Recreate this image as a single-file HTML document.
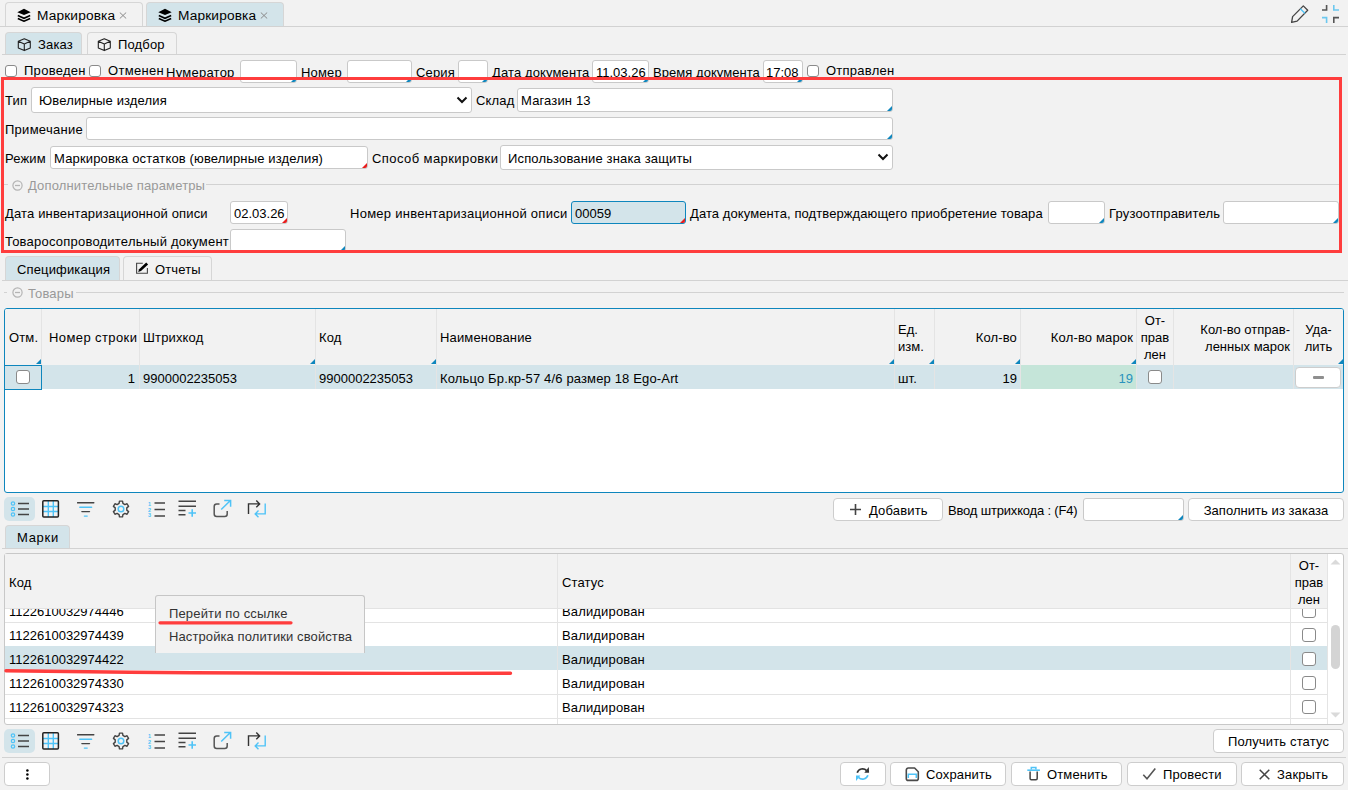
<!DOCTYPE html>
<html><head><meta charset="utf-8">
<style>
*{box-sizing:border-box}
html,body{margin:0;padding:0}
body{width:1348px;height:790px;background:#f2f2f2;position:relative;overflow:hidden;font-family:"Liberation Sans",sans-serif;font-size:13px;color:#000}
.a{position:absolute}
.t{position:absolute;white-space:nowrap;line-height:24px;height:25px;padding-top:1px;letter-spacing:0.15px}
.n{letter-spacing:0}
.hl{position:absolute;height:1px;background:#d2d2d2}
.tab{position:absolute;border:1px solid #d6d6d6;border-bottom:none;border-radius:4px 4px 0 0;background:#f2f2f2}
.tab.sel{background:#d3e4ea}
.inp{position:absolute;background:#fff;border:1px solid #c9c9c9;border-radius:3px;overflow:hidden}
.tri:after{content:"";position:absolute;right:0;bottom:0;width:0;height:0;border-left:5px solid transparent;border-bottom:5px solid #0e86bd}
.tri.r:after{border-bottom-color:#e81c1c}
.cb{position:absolute;width:12px;height:12px;border:1.5px solid #8a8a8a;border-radius:3px;background:#fff}
.btn{position:absolute;background:#fff;border:1px solid #cdcdcd;border-radius:4px;height:24px;line-height:22px;white-space:nowrap}
.vl{position:absolute;width:1px;background:#e4e4e4}
.gray{color:#999}
</style></head><body>

<!-- ===== top window tabs ===== -->
<div class="tab" style="left:5px;top:2px;width:138px;height:24px"></div>
<div class="tab sel" style="left:146px;top:2px;width:138px;height:24px"></div>
<div class="hl" style="left:0;top:26px;width:1348px"></div>
<svg class="a" style="left:17px;top:8px" width="14" height="14" viewBox="0 0 14 14"><path d="M7 0.8 L13.7 4.3 L7 6.9 L0.3 4.3 Z" fill="#000"/><path d="M0.8 7.6 L7 10.3 L13.2 7.6" fill="none" stroke="#000" stroke-width="1.6"/><path d="M0.8 10.5 L7 13.2 L13.2 10.5" fill="none" stroke="#000" stroke-width="1.6"/></svg>
<div class="t" style="left:37px;top:3px;font-size:13.7px">Маркировка</div>
<svg class="a" style="left:119px;top:12px" width="8" height="7" viewBox="0 0 8 7"><path d="M0.8 0.5 L7.2 6.5 M7.2 0.5 L0.8 6.5" stroke="#8a8a8a" stroke-width="1"/></svg>
<svg class="a" style="left:158px;top:8px" width="14" height="14" viewBox="0 0 14 14"><path d="M7 0.8 L13.7 4.3 L7 6.9 L0.3 4.3 Z" fill="#000"/><path d="M0.8 7.6 L7 10.3 L13.2 7.6" fill="none" stroke="#000" stroke-width="1.6"/><path d="M0.8 10.5 L7 13.2 L13.2 10.5" fill="none" stroke="#000" stroke-width="1.6"/></svg>
<div class="t" style="left:178px;top:3px;font-size:13.7px">Маркировка</div>
<svg class="a" style="left:260px;top:12px" width="8" height="7" viewBox="0 0 8 7"><path d="M0.8 0.5 L7.2 6.5 M7.2 0.5 L0.8 6.5" stroke="#8a8a8a" stroke-width="1"/></svg>

<!-- pencil + collapse -->
<svg class="a" style="left:1289px;top:3px" width="22" height="22" viewBox="0 0 22 22"><path d="M2.6 19.4 L3.6 13.6 L14.3 2.9 L18.7 7.2 L8.1 18.1 Z" fill="none" stroke="#444" stroke-width="1.3" stroke-linejoin="round"/><path d="M11.3 5.8 L15.9 10.2" stroke="#4fc3f7" stroke-width="1.4"/></svg>
<svg class="a" style="left:1321px;top:4px" width="20" height="20" viewBox="0 0 20 20"><path d="M1 6 H5.6 V1.1" fill="none" stroke="#555" stroke-width="1.6"/><path d="M18 13.6 H12.8 V18.9" fill="none" stroke="#555" stroke-width="1.6"/><path d="M12.8 1.1 V6 H18" fill="none" stroke="#6cc8ef" stroke-width="1.6"/><path d="M1 13.6 H5.6 V18.9" fill="none" stroke="#6cc8ef" stroke-width="1.6"/></svg>

<!-- ===== sub tabs ===== -->
<div class="tab sel" style="left:5px;top:32px;width:77px;height:22px"></div>
<div class="tab" style="left:87px;top:32px;width:90px;height:22px"></div>
<div class="hl" style="left:2px;top:54px;width:1344px"></div>
<svg class="a" style="left:17px;top:38px" width="15" height="14" viewBox="0 0 15 14"><path d="M7.3 0.7 L13.3 3.3 V9.9 L7.3 12.6 L1.3 9.9 V3.3 Z M1.3 3.3 L7.3 6 L13.3 3.3 M7.3 6 V12.6" fill="none" stroke="#222" stroke-width="1.1" stroke-linejoin="round"/></svg>
<div class="t" style="left:38px;top:32px">Заказ</div>
<svg class="a" style="left:97px;top:38px" width="15" height="14" viewBox="0 0 15 14"><path d="M7.3 0.7 L13.3 3.3 V9.9 L7.3 12.6 L1.3 9.9 V3.3 Z M1.3 3.3 L7.3 6 L13.3 3.3 M7.3 6 V12.6" fill="none" stroke="#222" stroke-width="1.1" stroke-linejoin="round"/></svg>
<div class="t" style="left:118px;top:32px">Подбор</div>

<!-- ===== checkbox row ===== -->
<div class="cb" style="left:5px;top:65px"></div>
<div class="t" style="left:24px;top:58px;letter-spacing:0.28px">Проведен</div>
<div class="cb" style="left:89px;top:65px"></div>
<div class="t" style="left:108px;top:58px;letter-spacing:0.33px">Отменен</div>
<div class="t" style="left:166px;top:60px;letter-spacing:0.25px">Нумератор</div>
<div class="inp tri" style="left:240px;top:60px;width:57px;height:23px"></div>
<div class="t" style="left:301px;top:60px;letter-spacing:0.15px">Номер</div>
<div class="inp tri" style="left:347px;top:60px;width:65px;height:23px"></div>
<div class="t" style="left:416px;top:60px;letter-spacing:0.15px">Серия</div>
<div class="inp tri" style="left:458px;top:60px;width:30px;height:23px"></div>
<div class="t" style="left:492px;top:60px;letter-spacing:0.12px">Дата документа</div>
<div class="inp tri" style="left:592px;top:60px;width:57px;height:23px"></div>
<div class="t n" style="left:596px;top:60px">11.03.26</div>
<div class="t" style="left:653px;top:60px;letter-spacing:0.05px">Время документа</div>
<div class="inp tri" style="left:763px;top:60px;width:40px;height:23px"></div>
<div class="t n" style="left:766px;top:60px">17:08</div>
<div class="cb" style="left:807px;top:65px"></div>
<div class="t" style="left:826px;top:58px;letter-spacing:0.25px">Отправлен</div>


<!-- ===== form in red rect ===== -->
<div class="t" style="left:5px;top:88px">Тип</div>
<div class="inp" style="left:31px;top:87px;width:441px;height:26px"></div>
<div class="t" style="left:39px;top:88px">Ювелирные изделия</div>
<svg class="a" style="left:456px;top:96px" width="12" height="8" viewBox="0 0 12 8"><path d="M1.5 1.5 L6 6 L10.5 1.5" fill="none" stroke="#111" stroke-width="2"/></svg>
<div class="t" style="left:476px;top:88px">Склад</div>
<div class="inp tri" style="left:517px;top:88px;width:376px;height:24px"></div>
<div class="t" style="left:521px;top:88px">Магазин 13</div>

<div class="t" style="left:5px;top:117px;letter-spacing:0.27px">Примечание</div>
<div class="inp tri" style="left:86px;top:117px;width:807px;height:23px"></div>

<div class="t" style="left:5px;top:146px">Режим</div>
<div class="inp tri r" style="left:50px;top:146px;width:318px;height:23px"></div>
<div class="t" style="left:54px;top:146px">Маркировка остатков (ювелирные изделия)</div>
<div class="t" style="left:372px;top:146px;letter-spacing:0.42px">Способ маркировки</div>
<div class="inp" style="left:500px;top:145px;width:393px;height:25px"></div>
<div class="t" style="left:508px;top:146px">Использование знака защиты</div>
<svg class="a" style="left:877px;top:153px" width="12" height="8" viewBox="0 0 12 8"><path d="M1.5 1.5 L6 6 L10.5 1.5" fill="none" stroke="#111" stroke-width="2"/></svg>

<div class="hl" style="left:4px;top:184px;width:4px"></div>
<svg class="a" style="left:12px;top:180px" width="11" height="11" viewBox="0 0 11 11"><circle cx="5.5" cy="5.5" r="4.6" fill="none" stroke="#b4b4b4" stroke-width="1.2"/><path d="M3 5.5 H8" stroke="#b4b4b4" stroke-width="1.3"/></svg>
<div class="t gray" style="left:28px;top:173px">Дополнительные параметры</div>
<div class="hl" style="left:206px;top:184px;width:1133px"></div>

<div class="t" style="left:5px;top:201px">Дата инвентаризационной описи</div>
<div class="inp tri r" style="left:230px;top:201px;width:58px;height:23px"></div>
<div class="t n" style="left:234px;top:201px">02.03.26</div>
<div class="t" style="left:350px;top:201px;letter-spacing:0.26px">Номер инвентаризационной описи</div>
<div class="inp tri r" style="left:571px;top:201px;width:115px;height:23px;background:#d3e4ea;border-color:#0e86bd"></div>
<div class="t n" style="left:575px;top:201px">00059</div>
<div class="t" style="left:690px;top:201px;letter-spacing:0.09px">Дата документа, подтверждающего приобретение товара</div>
<div class="inp tri" style="left:1048px;top:201px;width:57px;height:23px"></div>
<div class="t" style="left:1109px;top:201px;letter-spacing:0.17px">Грузоотправитель</div>
<div class="inp tri" style="left:1223px;top:201px;width:116px;height:23px"></div>

<div class="t" style="left:5px;top:229px;letter-spacing:0.22px">Товаросопроводительный документ</div>
<div class="inp tri" style="left:230px;top:229px;width:116px;height:23px"></div>


<!-- ===== spec tabs ===== -->
<div class="tab sel" style="left:5px;top:256px;width:115px;height:24px"></div>
<div class="tab" style="left:123px;top:256px;width:89px;height:24px"></div>
<div class="hl" style="left:2px;top:280px;width:1346px"></div>
<div class="t" style="left:17px;top:257px">Спецификация</div>
<svg class="a" style="left:135px;top:261px" width="14" height="14" viewBox="0 0 14 14"><path d="M7.8 2.3 H1.6 V12.3 H12.4 V6.9" fill="none" stroke="#444" stroke-width="1.1"/><path d="M3.2 10.9 L4.1 8.3 L11.2 1.6 L13.1 3.4 L6 10.1 Z" fill="#000"/></svg>
<div class="t" style="left:155px;top:257px">Отчеты</div>

<div class="hl" style="left:4px;top:292px;width:3px"></div>
<svg class="a" style="left:12px;top:287px" width="11" height="11" viewBox="0 0 11 11"><circle cx="5.5" cy="5.5" r="4.6" fill="none" stroke="#b4b4b4" stroke-width="1.2"/><path d="M3 5.5 H8" stroke="#b4b4b4" stroke-width="1.3"/></svg>
<div class="t gray" style="left:28px;top:281px">Товары</div>
<div class="hl" style="left:76px;top:292px;width:1268px"></div>

<!-- ===== goods table ===== -->
<div class="a" style="left:4px;top:308px;width:1340px;height:185px;border:1px solid #0e86bd;border-radius:3px;background:#fff;overflow:hidden">
  <div class="a" style="left:0;top:0;width:1338px;height:56px;background:#f2f2f2"></div>
  <div class="a" style="left:0;top:56px;width:1338px;height:24px;background:#d3e4ea"></div>
  <div class="a" style="left:1016px;top:56px;width:115px;height:24px;background:#c5e5d9"></div>
</div>
<div class="vl" style="left:41px;top:309px;height:80px"></div>
<div class="vl" style="left:139px;top:309px;height:80px"></div>
<div class="vl" style="left:315px;top:309px;height:80px"></div>
<div class="vl" style="left:436px;top:309px;height:80px"></div>
<div class="vl" style="left:894px;top:309px;height:80px"></div>
<div class="vl" style="left:934px;top:309px;height:80px"></div>
<div class="vl" style="left:1020px;top:309px;height:80px"></div>
<div class="vl" style="left:1136px;top:309px;height:80px"></div>
<div class="vl" style="left:1173px;top:309px;height:80px"></div>
<div class="vl" style="left:1293px;top:309px;height:80px"></div>
<!-- header triangles -->
<div class="a tri" style="left:35px;top:358px;width:6px;height:6px"></div>
<div class="a tri" style="left:309px;top:358px;width:6px;height:6px"></div>
<div class="a tri" style="left:430px;top:358px;width:6px;height:6px"></div>
<div class="a tri" style="left:888px;top:358px;width:6px;height:6px"></div>
<div class="a tri" style="left:928px;top:358px;width:6px;height:6px"></div>
<div class="a tri" style="left:1014px;top:358px;width:6px;height:6px"></div>
<div class="a tri" style="left:1130px;top:358px;width:6px;height:6px"></div>
<div class="a tri" style="left:1337px;top:358px;width:6px;height:6px"></div>
<!-- header text -->
<div class="t" style="left:9px;top:325px">Отм.</div>
<div class="t" style="left:49px;top:325px;letter-spacing:0.4px">Номер строки</div>
<div class="t" style="left:143px;top:325px">Штрихкод</div>
<div class="t" style="left:319px;top:325px">Код</div>
<div class="t" style="left:440px;top:325px">Наименование</div>
<div class="a" style="left:898px;top:321px;line-height:17px;white-space:nowrap">Ед.<br>изм.</div>
<div class="t" style="left:934px;top:325px;width:83px;text-align:right">Кол-во</div>
<div class="t" style="left:1021px;top:325px;width:112px;text-align:right">Кол-во марок</div>
<div class="a" style="left:1137px;top:312px;width:36px;text-align:center;line-height:17px;white-space:nowrap">От-<br>прав<br>лен</div>
<div class="a" style="left:1174px;top:321px;width:116px;text-align:right;line-height:17px;white-space:nowrap">Кол-во отправ-<br>ленных марок</div>
<div class="a" style="left:1294px;top:321px;width:49px;text-align:center;line-height:17px;white-space:nowrap">Уда-<br>лить</div>
<!-- row -->
<div class="a" style="left:4px;top:365px;width:38px;height:25px;border:1.5px solid #0e86bd"></div>
<div class="cb" style="left:16px;top:370px;width:14px;height:14px"></div>
<div class="t n" style="left:42px;top:366px;width:93px;text-align:right">1</div>
<div class="t n" style="left:143px;top:366px">9900002235053</div>
<div class="t n" style="left:319px;top:366px">9900002235053</div>
<div class="t" style="left:440px;top:366px">Кольцо Бр.кр-57 4/6 размер 18 Ego-Art</div>
<div class="t" style="left:898px;top:366px">шт.</div>
<div class="t n" style="left:934px;top:366px;width:83px;text-align:right">19</div>
<div class="t n" style="left:1021px;top:366px;width:112px;text-align:right;color:#2a93bd">19</div>
<div class="cb" style="left:1148px;top:370px;width:14px;height:14px"></div>
<div class="btn" style="left:1295px;top:367px;width:46px;height:21px"></div>
<div class="a" style="left:1313px;top:376px;width:11px;height:3px;background:#8f8f8f;border-radius:1px"></div>

<!-- ===== toolbar 1 ===== -->
<div id="tb1" class="a" style="left:0;top:497px;width:280px;height:24px">
  <div class="a" style="left:4px;top:0;width:31px;height:24px;background:#d3e4ea;border-radius:5px"></div>
  <svg class="a" style="left:10px;top:4px" width="20" height="16" viewBox="0 0 20 16"><circle cx="3" cy="2.5" r="1.7" fill="none" stroke="#4fc3f7" stroke-width="1.2"/><circle cx="3" cy="8" r="1.7" fill="none" stroke="#4fc3f7" stroke-width="1.2"/><circle cx="3" cy="13.5" r="1.7" fill="none" stroke="#4fc3f7" stroke-width="1.2"/><path d="M8 2.5 H19 M8 8 H19 M8 13.5 H19" stroke="#444" stroke-width="1.4"/></svg>
  <svg class="a" style="left:42px;top:3px" width="18" height="18" viewBox="0 0 18 18"><path d="M6.3 1 V17 M11.3 1 V17 M1 6.5 H16 M1 11.5 H16" stroke="#4fc3f7" stroke-width="1.4"/><rect x="0.8" y="0.8" width="15.6" height="16.2" rx="1" fill="none" stroke="#222" stroke-width="1.5"/></svg>
  <svg class="a" style="left:77px;top:4px" width="18" height="16" viewBox="0 0 18 16"><path d="M0.6 1.8 H16.8" stroke="#444" stroke-width="1.4" stroke-linecap="round"/><path d="M2.8 6.3 H14.6" stroke="#4fc3f7" stroke-width="1.4" stroke-linecap="round"/><path d="M4.9 10.6 H12.5" stroke="#444" stroke-width="1.4" stroke-linecap="round"/><path d="M7.4 15.1 H10.2" stroke="#4fc3f7" stroke-width="1.4" stroke-linecap="round"/></svg>
  <svg class="a" style="left:112px;top:3px" width="18" height="18" viewBox="0 0 18 18"><path d="M10.92 3.42 L10.53 1.15 L7.47 1.15 L7.08 3.42 L5.13 4.55 L2.96 3.75 L1.44 6.40 L3.21 7.87 L3.21 10.13 L1.44 11.60 L2.96 14.25 L5.13 13.45 L7.08 14.58 L7.47 16.85 L10.53 16.85 L10.92 14.58 L12.87 13.45 L15.04 14.25 L16.56 11.60 L14.79 10.13 L14.79 7.87 L16.56 6.40 L15.04 3.75 L12.87 4.55 Z" fill="none" stroke="#444" stroke-width="1.4" stroke-linejoin="round"/><circle cx="9" cy="9" r="2.8" fill="none" stroke="#4fc3f7" stroke-width="1.5"/></svg>
  <svg class="a" style="left:148px;top:4px" width="19" height="16" viewBox="0 0 19 16"><text x="0" y="5" font-size="5.5" font-family="Liberation Sans" fill="#4fc3f7" font-weight="bold">1</text><text x="0" y="10.5" font-size="5.5" font-family="Liberation Sans" fill="#4fc3f7" font-weight="bold">2</text><text x="0" y="15.8" font-size="5.5" font-family="Liberation Sans" fill="#4fc3f7" font-weight="bold">3</text><path d="M6.5 2 H17 M6.5 8.5 H17 M6.5 15 H17" stroke="#444" stroke-width="1.4"/></svg>
  <svg class="a" style="left:178px;top:3px" width="19" height="17" viewBox="0 0 19 17"><path d="M0.5 1.2 H18 M0.5 6.2 H18 M0.5 10.5 H7.5 M0.5 14.8 H7.5" stroke="#444" stroke-width="1.4"/><path d="M10.5 13 H18 M14.2 9.3 V16.7" stroke="#4fc3f7" stroke-width="1.6"/></svg>
  <svg class="a" style="left:212px;top:2px" width="21" height="20" viewBox="0 0 21 20"><path d="M7.5 5.1 H4.7 a2.5 2.5 0 0 0 -2.5 2.5 V15.1 a2.5 2.5 0 0 0 2.5 2.5 H12.7 a2.5 2.5 0 0 0 2.5 -2.5 V12" fill="none" stroke="#555" stroke-width="1.5"/><path d="M9.2 10.5 L18.4 1.5 M12.2 1.4 H18.6 V7.8" fill="none" stroke="#4fc3f7" stroke-width="1.5"/></svg>
  <svg class="a" style="left:247px;top:2px" width="20" height="20" viewBox="0 0 20 20"><path d="M1.5 14.9 V4.9 H12.4 M9.3 1.6 L12.6 4.9 L9.3 8.2" fill="none" stroke="#333" stroke-width="1.4"/><path d="M18.2 4.4 V14.9 H8.4 M11.5 11.6 L8.2 14.9 L11.5 18.2" fill="none" stroke="#4fc3f7" stroke-width="1.4"/></svg>
</div>
<div class="btn" style="left:833px;top:498px;width:110px;height:23px"></div>
<svg class="a" style="left:850px;top:504px" width="11" height="11" viewBox="0 0 11 11"><path d="M5.5 0 V11 M0 5.5 H11" stroke="#444" stroke-width="1.6"/></svg>
<div class="t" style="left:869px;top:498px">Добавить</div>
<div class="t" style="left:948px;top:498px;letter-spacing:-0.18px">Ввод штрихкода : (F4)</div>
<div class="inp tri" style="left:1083px;top:498px;width:101px;height:23px"></div>
<div class="btn" style="left:1188px;top:498px;width:156px;height:23px"></div>
<div class="t" style="left:1188px;top:498px;width:156px;text-align:center;letter-spacing:0.05px">Заполнить из заказа</div>

<!-- ===== marks tab ===== -->
<div class="tab sel" style="left:5px;top:525px;width:65px;height:23px"></div>
<div class="hl" style="left:2px;top:548px;width:1346px"></div>
<div class="t" style="left:17px;top:525px;letter-spacing:0.7px">Марки</div>


<!-- ===== marks table ===== -->
<div class="a" style="left:4px;top:553px;width:1340px;height:172px;border:1px solid #c8c8c8;border-radius:3px;background:#fff"></div>
<div class="a" style="left:5px;top:646px;width:1322px;height:24px;background:#d3e4ea"></div>
<div class="hl" style="left:5px;top:622px;width:1322px;background:#e3e3e3"></div>
<div class="hl" style="left:5px;top:694px;width:1322px;background:#e3e3e3"></div>
<div class="hl" style="left:5px;top:718px;width:1322px;background:#e3e3e3"></div>
<div class="a" style="left:0;top:609px;width:1348px;height:115px;overflow:hidden">
 <div class="a" style="left:0;top:-609px;width:1348px;height:790px">
<div class="t n" style="left:9px;top:599px">1122610032974446</div><div class="t" style="left:562px;top:599px">Валидирован</div><div class="cb" style="left:1302px;top:604px;width:14px;height:14px"></div>
<div class="t n" style="left:9px;top:623px">1122610032974439</div><div class="t" style="left:562px;top:623px">Валидирован</div><div class="cb" style="left:1302px;top:628px;width:14px;height:14px"></div>
<div class="t n" style="left:9px;top:647px">1122610032974422</div><div class="t" style="left:562px;top:647px">Валидирован</div><div class="cb" style="left:1302px;top:652px;width:14px;height:14px"></div>
<div class="t n" style="left:9px;top:671px">1122610032974330</div><div class="t" style="left:562px;top:671px">Валидирован</div><div class="cb" style="left:1302px;top:676px;width:14px;height:14px"></div>
<div class="t n" style="left:9px;top:695px">1122610032974323</div><div class="t" style="left:562px;top:695px">Валидирован</div><div class="cb" style="left:1302px;top:700px;width:14px;height:14px"></div>

 </div>
</div>
<div class="a" style="left:5px;top:554px;width:1322px;height:55px;background:#f2f2f2;border-bottom:1px solid #e3e3e3"></div>
<div class="vl" style="left:557px;top:554px;height:170px"></div>
<div class="vl" style="left:1290px;top:554px;height:170px"></div>
<div class="vl" style="left:1327px;top:554px;height:170px"></div>
<div class="t" style="left:9px;top:570px">Код</div>
<div class="t" style="left:562px;top:570px">Статус</div>
<div class="a" style="left:1291px;top:557px;width:36px;text-align:center;line-height:17px;white-space:nowrap">От-<br>прав<br>лен</div>
<!-- scrollbar -->
<svg class="a" style="left:1330px;top:559px" width="11" height="6" viewBox="0 0 11 6"><path d="M0.5 5.5 L5.5 0.5 L10.5 5.5 Z" fill="#dadada"/></svg>
<div class="a" style="left:1331px;top:625px;width:9px;height:44px;background:#d4d4d4;border-radius:5px"></div>
<svg class="a" style="left:1330px;top:712px" width="11" height="6" viewBox="0 0 11 6"><path d="M0.5 0.5 L5.5 5.5 L10.5 0.5 Z" fill="#dadada"/></svg>

<!-- context menu -->
<div class="a" style="left:155px;top:595px;width:210px;height:58px;background:#f2f2f2;border:1px solid #c6c6c6;border-bottom:none;border-radius:3px 3px 0 0;z-index:3"></div>
<div class="t" style="left:169px;top:601px;color:#333;z-index:4">Перейти по ссылке</div>
<div class="t" style="left:169px;top:624px;color:#333;z-index:4;letter-spacing:0.1px">Настройка политики свойства</div>
<svg class="a" style="left:0;top:600px;z-index:6" width="600" height="90" viewBox="0 600 600 90"><path d="M160 622.8 L291 622.8" stroke="#ff3d3d" stroke-width="3.2" stroke-linecap="round"/><path d="M6 670.7 Q250 674 510.5 673.2" fill="none" stroke="#ff3d3d" stroke-width="3.4" stroke-linecap="round"/></svg>

<!-- ===== toolbar 2 ===== -->
<div id="tb2x" class="a" style="left:0;top:729px;width:280px;height:24px">
  <div class="a" style="left:4px;top:0;width:31px;height:24px;background:#d3e4ea;border-radius:5px"></div>
  <svg class="a" style="left:10px;top:4px" width="20" height="16" viewBox="0 0 20 16"><circle cx="3" cy="2.5" r="1.7" fill="none" stroke="#4fc3f7" stroke-width="1.2"/><circle cx="3" cy="8" r="1.7" fill="none" stroke="#4fc3f7" stroke-width="1.2"/><circle cx="3" cy="13.5" r="1.7" fill="none" stroke="#4fc3f7" stroke-width="1.2"/><path d="M8 2.5 H19 M8 8 H19 M8 13.5 H19" stroke="#444" stroke-width="1.4"/></svg>
  <svg class="a" style="left:42px;top:3px" width="18" height="18" viewBox="0 0 18 18"><path d="M6.3 1 V17 M11.3 1 V17 M1 6.5 H16 M1 11.5 H16" stroke="#4fc3f7" stroke-width="1.4"/><rect x="0.8" y="0.8" width="15.6" height="16.2" rx="1" fill="none" stroke="#222" stroke-width="1.5"/></svg>
  <svg class="a" style="left:77px;top:4px" width="18" height="16" viewBox="0 0 18 16"><path d="M0.6 1.8 H16.8" stroke="#444" stroke-width="1.4" stroke-linecap="round"/><path d="M2.8 6.3 H14.6" stroke="#4fc3f7" stroke-width="1.4" stroke-linecap="round"/><path d="M4.9 10.6 H12.5" stroke="#444" stroke-width="1.4" stroke-linecap="round"/><path d="M7.4 15.1 H10.2" stroke="#4fc3f7" stroke-width="1.4" stroke-linecap="round"/></svg>
  <svg class="a" style="left:112px;top:3px" width="18" height="18" viewBox="0 0 18 18"><path d="M10.92 3.42 L10.53 1.15 L7.47 1.15 L7.08 3.42 L5.13 4.55 L2.96 3.75 L1.44 6.40 L3.21 7.87 L3.21 10.13 L1.44 11.60 L2.96 14.25 L5.13 13.45 L7.08 14.58 L7.47 16.85 L10.53 16.85 L10.92 14.58 L12.87 13.45 L15.04 14.25 L16.56 11.60 L14.79 10.13 L14.79 7.87 L16.56 6.40 L15.04 3.75 L12.87 4.55 Z" fill="none" stroke="#444" stroke-width="1.4" stroke-linejoin="round"/><circle cx="9" cy="9" r="2.8" fill="none" stroke="#4fc3f7" stroke-width="1.5"/></svg>
  <svg class="a" style="left:148px;top:4px" width="19" height="16" viewBox="0 0 19 16"><text x="0" y="5" font-size="5.5" font-family="Liberation Sans" fill="#4fc3f7" font-weight="bold">1</text><text x="0" y="10.5" font-size="5.5" font-family="Liberation Sans" fill="#4fc3f7" font-weight="bold">2</text><text x="0" y="15.8" font-size="5.5" font-family="Liberation Sans" fill="#4fc3f7" font-weight="bold">3</text><path d="M6.5 2 H17 M6.5 8.5 H17 M6.5 15 H17" stroke="#444" stroke-width="1.4"/></svg>
  <svg class="a" style="left:178px;top:3px" width="19" height="17" viewBox="0 0 19 17"><path d="M0.5 1.2 H18 M0.5 6.2 H18 M0.5 10.5 H7.5 M0.5 14.8 H7.5" stroke="#444" stroke-width="1.4"/><path d="M10.5 13 H18 M14.2 9.3 V16.7" stroke="#4fc3f7" stroke-width="1.6"/></svg>
  <svg class="a" style="left:212px;top:2px" width="21" height="20" viewBox="0 0 21 20"><path d="M7.5 5.1 H4.7 a2.5 2.5 0 0 0 -2.5 2.5 V15.1 a2.5 2.5 0 0 0 2.5 2.5 H12.7 a2.5 2.5 0 0 0 2.5 -2.5 V12" fill="none" stroke="#555" stroke-width="1.5"/><path d="M9.2 10.5 L18.4 1.5 M12.2 1.4 H18.6 V7.8" fill="none" stroke="#4fc3f7" stroke-width="1.5"/></svg>
  <svg class="a" style="left:247px;top:2px" width="20" height="20" viewBox="0 0 20 20"><path d="M1.5 14.9 V4.9 H12.4 M9.3 1.6 L12.6 4.9 L9.3 8.2" fill="none" stroke="#333" stroke-width="1.4"/><path d="M18.2 4.4 V14.9 H8.4 M11.5 11.6 L8.2 14.9 L11.5 18.2" fill="none" stroke="#4fc3f7" stroke-width="1.4"/></svg>
</div>

<div class="btn" style="left:1213px;top:729px;width:131px;height:24px"></div>
<div class="t" style="left:1213px;top:729px;width:131px;text-align:center">Получить статус</div>
<div class="hl" style="left:2px;top:757px;width:1344px"></div>

<!-- ===== footer ===== -->
<div class="btn" style="left:4px;top:762px;width:46px;height:24px"></div>
<svg class="a" style="left:25px;top:768px" width="5" height="13" viewBox="0 0 5 13"><circle cx="2.4" cy="2.4" r="1.25" fill="#000"/><circle cx="2.4" cy="6.4" r="1.25" fill="#000"/><circle cx="2.4" cy="10.5" r="1.25" fill="#000"/></svg>
<div class="btn" style="left:840px;top:762px;width:46px;height:24px"></div>
<svg class="a" style="left:855px;top:766px" width="16" height="16" viewBox="0 0 16 16"><path d="M2.2 6.8 A5.6 5.6 0 0 1 11.6 4.6" fill="none" stroke="#333" stroke-width="1.7"/><path d="M13.8 0.9 L14.1 6.8 L9.3 6.8 Z" fill="#333"/><path d="M12.9 9.3 A5.6 5.6 0 0 1 3.5 11.4" fill="none" stroke="#4fc3f7" stroke-width="1.7"/><path d="M1 15 L1 9.4 L5.4 9.4 Z" fill="#4fc3f7"/></svg>
<div class="btn" style="left:890px;top:762px;width:116px;height:24px"></div>
<svg class="a" style="left:905px;top:766px" width="15" height="16" viewBox="0 0 15 16"><path d="M3.3 2 H9.6 L13.3 5.7 V12.4 a2 2 0 0 1 -2 2 H3.3 a2 2 0 0 1 -2 -2 V4 a2 2 0 0 1 2 -2 Z" fill="none" stroke="#4a4a4a" stroke-width="1.6" stroke-linejoin="round"/><path d="M3.3 12 V8.3 H11.3 V12" fill="none" stroke="#4fc3f7" stroke-width="1.5"/></svg>
<div class="t" style="left:926px;top:762px">Сохранить</div>
<div class="btn" style="left:1011px;top:762px;width:111px;height:24px"></div>
<svg class="a" style="left:1026px;top:765px" width="15" height="17" viewBox="0 0 15 17"><path d="M4.1 6.6 V13.6 a1.2 1.2 0 0 0 1.2 1.2 H10 a1.2 1.2 0 0 0 1.2 -1.2 V6.6" fill="none" stroke="#444" stroke-width="1.5"/><path d="M1.3 5.2 H13.9" stroke="#4fc3f7" stroke-width="1.6"/><path d="M5.3 4.5 V2.6 H9.9 V4.5" fill="none" stroke="#4fc3f7" stroke-width="1.5"/></svg>
<div class="t" style="left:1047px;top:762px">Отменить</div>
<div class="btn" style="left:1127px;top:762px;width:110px;height:24px"></div>
<svg class="a" style="left:1142px;top:767px" width="14" height="14" viewBox="0 0 14 14"><path d="M1.3 7.8 L5 11.8 L13.3 1.6" fill="none" stroke="#555" stroke-width="1.6"/></svg>
<div class="t" style="left:1163px;top:762px">Провести</div>
<div class="btn" style="left:1241px;top:762px;width:103px;height:24px"></div>
<svg class="a" style="left:1259px;top:769px" width="11" height="11" viewBox="0 0 11 11"><path d="M0.7 0.7 L10.3 10.3 M10.3 0.7 L0.7 10.3" stroke="#444" stroke-width="1.5"/></svg>
<div class="t" style="left:1277px;top:762px">Закрыть</div>

<!-- red annotation rect -->
<div class="a" style="left:1px;top:77px;width:1341px;height:176px;border:3px solid #ff3d3d;z-index:5"></div>
</body></html>
